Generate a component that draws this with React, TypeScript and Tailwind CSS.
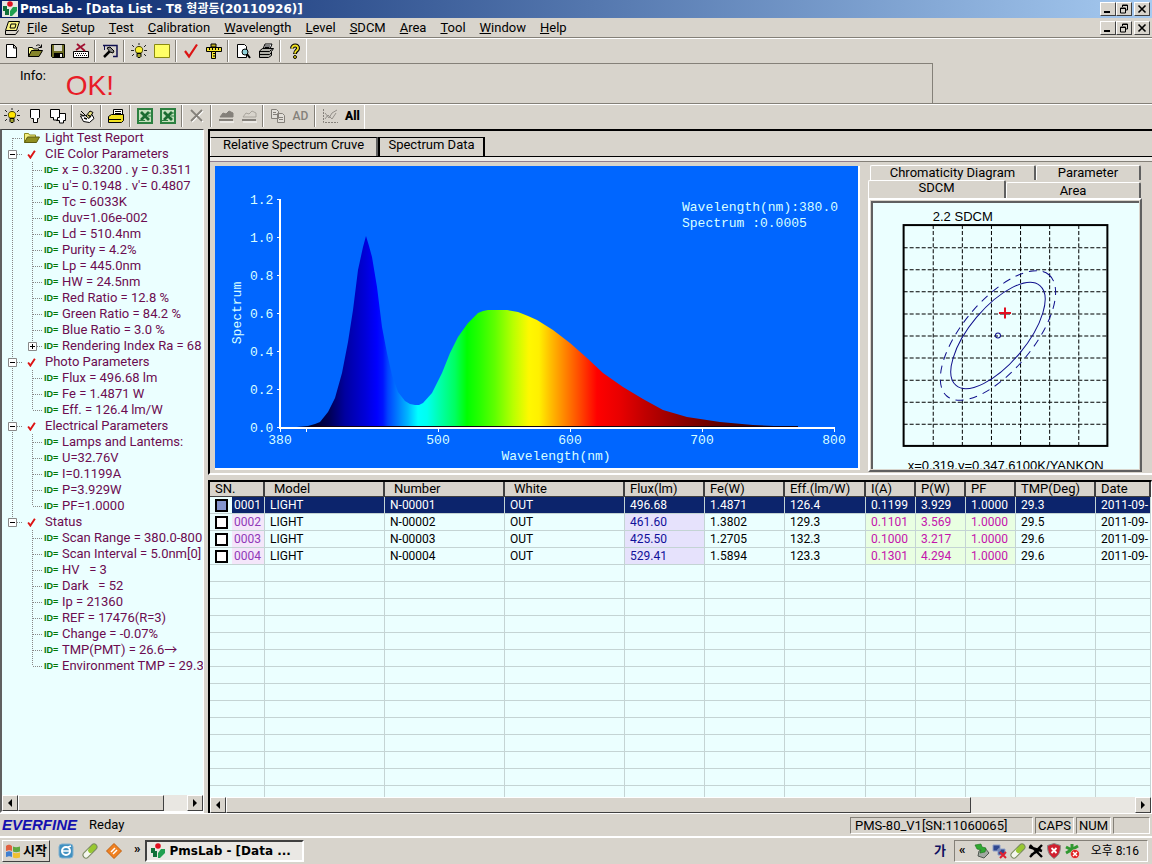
import type { ReactNode } from "react";

const RAISED = "border border-t-white border-l-white border-b-[#404040] border-r-[#404040] bg-[#d8d4cc]";
const SUNKEN = "border border-t-[#848078] border-l-[#848078] border-b-white border-r-white";

const MENU = ["File", "Setup", "Test", "Calibration", "Wavelength", "Level", "SDCM", "Area", "Tool", "Window", "Help"];

type Group = { title: string; items: string[]; expandable?: number };

const GROUPS: Group[] = [
  {
    title: "CIE Color Parameters",
    expandable: 11,
    items: [
      "x = 0.3200 . y = 0.3511", "u'= 0.1948 . v'= 0.4807", "Tc = 6033K", "duv=1.06e-002",
      "Ld = 510.4nm", "Purity = 4.2%", "Lp = 445.0nm", "HW = 24.5nm", "Red Ratio = 12.8 %",
      "Green Ratio = 84.2 %", "Blue Ratio = 3.0 %", "Rendering Index Ra = 68",
    ],
  },
  { title: "Photo Parameters", items: ["Flux = 496.68 lm", "Fe = 1.4871 W", "Eff. = 126.4 lm/W"] },
  { title: "Electrical Parameters", items: ["Lamps and Lantems:", "U=32.76V", "I=0.1199A", "P=3.929W", "PF=1.0000"] },
  {
    title: "Status",
    items: [
      "Scan Range = 380.0-800.", "Scan Interval = 5.0nm[0]", "HV   = 3", "Dark   = 52", "Ip = 21360",
      "REF = 17476(R=3)", "Change = -0.07%", "TMP(PMT) = 26.6→", "Environment TMP = 29.3",
    ],
  },
];

const COLUMNS = [
  { name: "SN.", col: "w-[55px]", cell: "" },
  { name: "Model", col: "w-[120px]", cell: "" },
  { name: "Number", col: "w-[120px]", cell: "" },
  { name: "White", col: "w-[120px]", cell: "" },
  { name: "Flux(lm)", col: "w-[80px]", cell: "bg-[#e6e2fc] text-[#10109a]" },
  { name: "Fe(W)", col: "w-[80px]", cell: "" },
  { name: "Eff.(lm/W)", col: "w-[81px]", cell: "" },
  { name: "I(A)", col: "w-[50px]", cell: "bg-[#e9ffe2] text-[#c414ac]" },
  { name: "P(W)", col: "w-[50px]", cell: "bg-[#e9ffe2] text-[#c414ac]" },
  { name: "PF", col: "w-[50px]", cell: "bg-[#e9ffe2] text-[#c414ac]" },
  { name: "TMP(Deg)", col: "w-[80px]", cell: "" },
  { name: "Date", col: "", cell: "" },
];

const ROWS = [
  ["0001", "LIGHT", "N-00001", "OUT", "496.68", "1.4871", "126.4", "0.1199", "3.929", "1.0000", "29.3", "2011-09-"],
  ["0002", "LIGHT", "N-00002", "OUT", "461.60", "1.3802", "129.3", "0.1101", "3.569", "1.0000", "29.5", "2011-09-"],
  ["0003", "LIGHT", "N-00003", "OUT", "425.50", "1.2705", "132.3", "0.1000", "3.217", "1.0000", "29.6", "2011-09-"],
  ["0004", "LIGHT", "N-00004", "OUT", "529.41", "1.5894", "123.3", "0.1301", "4.294", "1.0000", "29.6", "2011-09-"],
];

const EMPTY_ROWS = Array.from({ length: 14 }, (_, i) => i);

const Icon = ({ children, size = "size-4" }: { children: ReactNode; size?: string }) => (
  <svg viewBox="0 0 16 16" className={`${size} shrink-0`} fill="none" stroke="#000" aria-hidden="true">
    {children}
  </svg>
);

const LogoIcon = ({ size }: { size?: string }) => (
  <Icon size={size}>
    <rect width="16" height="16" fill="#e8e8e2" stroke="none" />
    <circle cx="8" cy="3" r="2.8" fill="#e01020" stroke="none" />
    <path d="M1 5h4v3h2v6H3v-4H1z" fill="#107038" stroke="none" />
    <path d="M15 6h-4l-3 4v5h2l5-5z" fill="#20a050" stroke="none" />
  </Icon>
);

const NewIcon = () => (
  <Icon><path d="M2.500 1.500h7l3 3v10h-10zM9.500 1.500v3.500H13" fill="#fff" /></Icon>
);

const OpenIcon = () => (
  <Icon>
    <path d="M1.5 13.5v-9h4l1 1.500h5v2" fill="#ffff90" />
    <path d="M1.500 13.500l3-6h11l-3.500 6z" fill="#84842a" />
    <path d="M9 3c2-2 4-1 5 1M14.500 1.500v3h-3" />
  </Icon>
);

const SaveIcon = () => (
  <Icon>
    <path d="M1.500 1.500h13v13h-12l-1-1z" fill="#6e6e24" />
    <path d="M4 2h8v6H4z" fill="#d8d8cc" stroke="none" />
    <path d="M4 10h9v4H4z" fill="#000" stroke="none" />
    <path d="M10 11h2v3h-2z" fill="#eee" stroke="none" />
  </Icon>
);

const EraseIcon = () => (
  <Icon>
    <path d="M.5 8.500h15v6H.5z" fill="#fff" />
    <path d="M2 10.500h12M3 12.500h11" strokeDasharray="1 1" />
    <path d="M4 1l8 7M12 1L3 7" stroke="#a01030" strokeWidth="1.800" />
  </Icon>
);

const HammerIcon = () => (
  <Icon>
    <path d="M1 2.500h14v11h-4" stroke="#101050" strokeWidth="1.500" />
    <path d="M2.500 3v4" stroke="#101050" />
    <path d="M2 14l6-6" stroke="#000" strokeWidth="2.500" />
    <path d="M5 5l3-1 4 4-1 2-3-1z" fill="#888" />
  </Icon>
);

const BulbIcon = ({ fill = "#f8f030" }: { fill?: string }) => (
  <Icon>
    <path d="M5.500 10C3 6 5 3.500 8 3.500S13 6 10.500 10z" fill={fill} stroke="#403c00" />
    <path d="M6 10.500h4v3l-1 1H7l-1-1z" fill="#a0a030" />
    <path d="M1 2l2 2M15 2l-2 2M0 7.500h3M13 7.500h3M1 13l2-2M15 13l-2-2M8 0v2" stroke="#222" />
  </Icon>
);

const YellowIcon = () => (
  <Icon><path d="M.5 1.500h15v13H.5z" fill="#ffff66" stroke="#8a8a10" /></Icon>
);

const CheckIcon = ({ size, weight = 2.2 }: { size?: string; weight?: number }) => (
  <Icon size={size}><path d="M2 8l4 5.500L14 1.500" stroke="#dc1414" strokeWidth={weight} /></Icon>
);

const RulerIcon = () => (
  <Icon>
    <path d="M.5 4.500h15v4h-15z" fill="#f4e430" />
    <path d="M5.500 8.500h4v7h-4z" fill="#f4e430" />
    <path d="M5 1h5v3H5z" fill="#c0b020" />
    <path d="M3.500 5v2M6.500 5v2M9.500 5v2M12.500 5v2M7 10.500h2M7 13h2" />
  </Icon>
);

const PreviewIcon = () => (
  <Icon>
    <path d="M2.500 1.500h7l2 2v11h-9z" fill="#fff" />
    <circle cx="10" cy="9" r="3" fill="#90d0d8" />
    <path d="M12 11l3 4" strokeWidth="2" />
  </Icon>
);

const PrintIcon = () => (
  <Icon>
    <path d="M5 6l2-5h7l-2 5" fill="#fff" />
    <path d="M1.500 8l3-2.500h11l-2 3v4l-3 2H1.500z" fill="#b0b0a8" />
    <path d="M1.500 8.500h10l2-2M1.500 11.500h10l2-2M7 3h5M6.500 4.500h5" />
  </Icon>
);

const HelpIcon = () => (
  <Icon>
    <path d="M5 5.500C5 1.500 11.500 1.500 11 5.500 10.500 8 8 7.500 8 11" stroke="#000" strokeWidth="4" />
    <path d="M5 5.500C5 1.500 11.500 1.500 11 5.500 10.500 8 8 7.500 8 10.500" stroke="#f0e020" strokeWidth="1.800" />
    <circle cx="8" cy="14" r="1.500" fill="#f0e020" />
  </Icon>
);

const LampIcon = ({ double = false }: { double?: boolean }) => (
  <Icon>
    {double ? (
      <>
        <path d="M6.500 5.500h9v7h-2v2.500h-4v-2.500h-3z" fill="#fff" />
        <path d="M.5 1.500h9v8h-2v2.500h-4V9.500h-3z" fill="#fff" />
      </>
    ) : (
      <path d="M3.500 1.500h9v8l-1 1h-1v4h-4v-4h-2l-1-1z" fill="#fff" />
    )}
  </Icon>
);

const PenIcon = () => (
  <Icon>
    <path d="M1.500 8l3 5.500 6 1 4.500-4-2-4-5 1z" fill="#fff" />
    <path d="M2 3l4 4M1 6l4 2M7 8l4-5 3 1.500-4 6z" fill="#e8e080" />
    <path d="M5 10l3 1M9 7l3 2" strokeWidth="1.500" />
  </Icon>
);

const StackIcon = () => (
  <Icon>
    <path d="M5.500 1.500h9v8h-9z" fill="#fff" />
    <path d="M7 3.500h6M7 5.500h6" />
    <path d="M.5 8.500l3-2h12v6l-2 2H.5z" fill="#f0e020" />
    <path d="M1 11.500h12" />
  </Icon>
);

const ExcelIcon = () => (
  <Icon>
    <path d="M1 1h14v14H1z" fill="#c4e0bc" stroke="#2c8040" strokeWidth="2" />
    <path d="M4 4l8 8M12 4l-8 8" stroke="#1c6c30" strokeWidth="2.800" />
    <path d="M11 5h3M11 8h3M2 12.500h6" stroke="#2c8040" />
  </Icon>
);

const CrossIcon = () => (
  <Icon>
    <path d="M3 3l11 11M14 3L3 14" stroke="#fff" strokeWidth="1.500" />
    <path d="M2 2l11 11M13 2L2 13" stroke="#84807a" strokeWidth="1.800" />
  </Icon>
);

const HillIcon = ({ filled = false }: { filled?: boolean }) => (
  <Icon>
    <path d="M2 9l3-4 3 1 3-3 4 2v4z" fill={filled ? "#84807a" : "none"} stroke={filled ? "#84807a" : "#a8a49c"} />
    <path d="M1 12h14" stroke="#84807a" strokeWidth="2" />
    <path d="M2 14h14" stroke="#fff" />
  </Icon>
);

const CopyIcon = () => (
  <Icon>
    <path d="M1.500 1.500h5l2 2v7h-7zM7.500 5.500h5l2 2v7h-7z" fill="#e2dfd9" stroke="#84807a" />
    <path d="M3 4.500h3M3 6.500h4M9 9.500h4M9 11.500h4" stroke="#84807a" />
  </Icon>
);

const PlotIcon = () => (
  <Icon>
    <path d="M1.500 1v13.500H16" stroke="#84807a" strokeDasharray="2 1" />
    <path d="M3 5l4 5 3-5 5-3M3 11l3-4 4 4 4-6" stroke="#94908a" />
  </Icon>
);

const FolderIcon = () => (
  <Icon>
    <path d="M.5 12.500v-9h4l1 1.500h6v2" fill="#f4f080" stroke="#8c8c20" />
    <path d="M.5 12.500l3-5.500h12l-3 5.500z" fill="#909020" stroke="#5c5c10" />
  </Icon>
);

const ToolButton = ({ label, children }: { label: string; children: ReactNode }) => (
  <button aria-label={label} className="flex h-[22px] w-[23px] items-center justify-center">{children}</button>
);

const Sep = () => (
  <span className="flex h-[22px] w-[6px] justify-center">
    <span className="w-[2px] border-l border-l-[#848078] border-r border-r-white" />
  </span>
);

const WindowButtons = () => (
  <div className="flex items-center pr-[2px]">
    <button aria-label="Minimize" className={`${RAISED} flex h-[14px] w-4 items-center justify-center`}>
      <svg viewBox="0 0 12 10" className="h-[10px] w-3"><path d="M2 8h6" stroke="#000" strokeWidth="2" /></svg>
    </button>
    <button aria-label="Restore" className={`${RAISED} flex h-[14px] w-4 items-center justify-center`}>
      <svg viewBox="0 0 12 10" className="h-[10px] w-3" fill="none" stroke="#000">
        <path d="M4.500 3V1h5v5H8M4 1.500h6M2.500 4h5v5h-5zM2 4.500h6" />
      </svg>
    </button>
    <button aria-label="Close" className={`${RAISED} ml-[2px] flex h-[14px] w-4 items-center justify-center`}>
      <svg viewBox="0 0 12 10" className="h-[10px] w-3"><path d="M2.500 1.500l7 7M9.500 1.500l-7 7" stroke="#000" strokeWidth="1.600" /></svg>
    </button>
  </div>
);

// dotted connector left of each tree entry
const Guide = ({ up, down, right, box }: { up?: boolean; down?: boolean; right?: boolean; box?: "+" | "-" }) => (
  <svg viewBox="0 0 20 16" className="h-4 w-5 shrink-0" fill="none" stroke="#888" aria-hidden="true">
    {up && <path d="M10.500 0v8" strokeDasharray="1 1" />}
    {down && <path d="M10.500 8v8" strokeDasharray="1 1" />}
    {right && <path d="M11 8.500h9" strokeDasharray="1 1" />}
    {box && (
      <>
        <path d="M6.500 4.500h8v8h-8z" fill="#fff" />
        <path d={box === "+" ? "M8 8.500h5M10.500 6v5" : "M8 8.500h5"} stroke="#000" />
      </>
    )}
  </svg>
);

const ScrollBar = ({ thumb }: { thumb: string }) => (
  <div className="flex h-4 shrink-0 bg-[#e9e7e2]">
    <button aria-label="Scroll left" className={`${RAISED} flex w-4 items-center justify-center`}>
      <svg viewBox="0 0 8 8" className="size-2"><path d="M6 0v8L2 4z" /></svg>
    </button>
    <div className="flex flex-1"><div className={`${RAISED} ${thumb}`} /></div>
    <button aria-label="Scroll right" className={`${RAISED} flex w-4 items-center justify-center`}>
      <svg viewBox="0 0 8 8" className="size-2"><path d="M2 0v8l4-4z" /></svg>
    </button>
  </div>
);

const TreePanel = () => (
  <div className="flex w-[204px] shrink-0 flex-col border-t border-r border-b-2 border-l-2 border-t-[#404040] border-r-white border-b-white border-l-[#606060] bg-[#ebffff]">
    <ul className="min-h-0 flex-1 overflow-hidden whitespace-pre text-[13px] leading-4 text-[#6c0c50]">
      <li className="flex h-4">
        <Guide down right />
        <span className="mr-1 flex w-[19px] justify-center"><FolderIcon /></span>
        Light Test Report
      </li>
      {GROUPS.map((g, gi) => {
        const last = gi === GROUPS.length - 1;
        return (
          <li key={g.title}>
            <div className="flex h-4">
              <Guide up down={!last} right box="-" />
              <span className="mr-1 flex w-[19px] items-center justify-center"><CheckIcon size="size-[9px]" weight={3.4} /></span>
              {g.title}
            </div>
            <ul>
              {g.items.map((item, i) => (
                <li key={item} className="flex h-4">
                  <Guide up={!last} down={!last} />
                  <Guide up down={i < g.items.length - 1} right box={g.expandable === i ? "+" : undefined} />
                  <span className="w-5 shrink-0 pl-[2px] font-[Liberation_Sans] text-[9px] font-bold text-[#007808]">ID=</span>
                  {item}
                </li>
              ))}
            </ul>
          </li>
        );
      })}
    </ul>
    <ScrollBar thumb="w-[146px]" />
  </div>
);

const CURVE =
  "M70 262L93 260L100 258L105 256L113 246L120 232L127 207L133 176L138 144L143 104L148 81L151 70L154 80L157 91L162 121L167 161L172 187L177 209L183 226L190 235L195 238L200 239L204 239L208 237L217 227L227 207L235 187L243 171L253 157L263 147L268 145L273 144L282 144L292 144L303 146L313 150L322 154L338 164L355 177L372 192L388 207L408 221L428 233L448 244L472 251L505 256L538 259L583 261V262Z";

const STOPS: [number, string][] = [
  [95, "#000020"], [115, "#000058"], [130, "#0000a0"], [150, "#0000d8"], [162, "#0000ff"], [168, "#0014ff"],
  [173, "#0044ff"], [182, "#0078ff"], [193, "#00b8ff"], [203, "#00ffff"], [212, "#00fff0"], [224, "#00ffb0"],
  [240, "#00ff60"], [252, "#00ff00"], [265, "#28ff00"], [280, "#60ff00"], [298, "#b8ff00"], [314, "#fff800"],
  [324, "#fff000"], [335, "#ffc000"], [350, "#ff8400"], [363, "#ff5000"], [382, "#ff0000"], [405, "#e80000"],
  [430, "#c00000"], [470, "#880000"], [520, "#500000"], [583, "#200000"],
];

const Y_TICKS = ["0.0", "0.2", "0.4", "0.6", "0.8", "1.0", "1.2"];
const X_TICKS: [number, string][] = [[65, "380"], [223, "500"], [355, "600"], [487, "700"], [619, "800"]];

const SpectrumChart = () => (
  <svg viewBox="0 0 643 302" className="h-full w-full bg-[#0066ff] font-[Liberation_Mono] text-[13px]" role="img" aria-label="Spectrum">
    <defs>
      <linearGradient id="spectrum" gradientUnits="userSpaceOnUse" x1="93" x2="583" y1="0" y2="0">
        {STOPS.map(([x, color]) => (
          <stop key={x} offset={(x - 93) / 490} stopColor={color} />
        ))}
      </linearGradient>
    </defs>
    <path d={CURVE} fill="url(#spectrum)" />
    <path d="M95 260.500H583" stroke="#100010" />
    <path d="M65 33V263M64 262H620" stroke="#fff" strokeWidth="2" />
    <g fill="#d8ffff" stroke="none">
      {Y_TICKS.map((t, i) => (
        <g key={t}>
          <path d={`M62 ${262 - i * 38}h4v-1h-4z`} fill="#fff" />
          <text x="35" y={266 - i * 38}>{t}</text>
        </g>
      ))}
      {X_TICKS.map(([x, t]) => (
        <g key={t}>
          <path d={`M${x} 262v4h1v-4z`} fill="#fff" />
          <text x={x} y="278" textAnchor="middle">{t}</text>
        </g>
      ))}
      <path d="M91 262v4h1v-4z" fill="#fff" />
      <text x="341" y="294" textAnchor="middle">Wavelength(nm)</text>
      <text transform="rotate(-90 26 147)" x="26" y="147" textAnchor="middle">Spectrum</text>
      <text x="467" y="45">Wavelength(nm):380.0</text>
      <text x="467" y="61">Spectrum :0.0005</text>
    </g>
  </svg>
);

const SdcmChart = () => (
  <svg viewBox="0 0 264 265" className="h-full w-full font-[Liberation_Sans] text-[13px]" role="img" aria-label="SDCM">
    <g stroke="#000" strokeDasharray="4 2">
      {[1, 2, 3, 4, 5, 6].map(i => <path key={i} d={`M${30.5 + i * 29} 22v220`} />)}
      {[1, 2, 3, 4, 5, 6, 7, 8, 9].map(i => <path key={i} d={`M30 ${22.5 + i * 22}h203`} />)}
    </g>
    <rect x="30" y="22" width="203" height="220" fill="none" stroke="#000" strokeWidth="2" />
    <g fill="none" stroke="#10108c">
      <ellipse cx="124" cy="132" rx="65" ry="28" transform="rotate(-50 124 132)" />
      <ellipse cx="124" cy="132" rx="79" ry="35" transform="rotate(-50 124 132)" strokeDasharray="8 6" />
      <circle cx="124" cy="132" r="2.500" />
    </g>
    <path d="M131 104v11M125 109.500h12" stroke="#e01020" strokeWidth="2" />
    <text x="59" y="18">2.2 SDCM</text>
    <text x="34" y="266">x=0.319,y=0.347,6100K/YANKON</text>
  </svg>
);

const TAB = "rounded-t-[2px] border-t border-l border-r-2 border-t-white border-l-white border-r-[#606060] bg-[#d8d4cc] leading-[14px]";

const ChartPane = () => (
  <div className="flex h-[346px] shrink-0 flex-col border-t-2 border-l-2 border-black border-b-2 border-b-white">
    <div className="flex h-[26px] items-end border-b border-b-black" role="tablist">
      <button role="tab" aria-selected="true" className="h-[19px] w-[168px] border-t border-l border-r-2 border-t-black border-l-white border-r-[#606060] pb-1 leading-[14px]">
        Relative Spectrum Cruve
      </button>
      <button role="tab" aria-selected="false" className="h-[19px] w-[107px] border border-b-0 border-l-2 border-r-2 border-black pb-1 leading-[14px]">
        Spectrum Data
      </button>
    </div>
    <div className="flex min-h-0 flex-1 border-t-4 border-t-[#eeece8]">
      <div className="min-w-0 flex-1 border-t border-t-[#907c90] pt-1 pb-[3px] pl-[5px]">
        <div className="h-full border-r-2 border-b-2 border-white"><SpectrumChart /></div>
      </div>
      <div className="flex w-[292px] shrink-0 flex-col border-t border-t-[#848078] pt-[3px] pr-[10px] pb-px pl-2">
        <div className="flex h-[15px] pr-px pl-[2px]">
          <button className={`${TAB} h-[15px] w-[166px] overflow-hidden`}>Chromaticity Diagram</button>
          <button className={`${TAB} h-[15px] flex-1 overflow-hidden`}>Parameter</button>
        </div>
        <div className="flex h-[18px] items-end pr-px">
          <button className={`${TAB} h-[18px] w-[138px] pb-[3px]`}>SDCM</button>
          <button className={`${TAB} h-4 flex-1`}>Area</button>
        </div>
        <div className="min-h-0 flex-1 border-2 border-t-white border-l-white border-r-[#606060] border-b-[#606060] p-px">
          <div className="h-full overflow-hidden border-t-2 border-l-2 border-[#606060] bg-[#ebffff]"><SdcmChart /></div>
        </div>
      </div>
    </div>
  </div>
);

const DataTable = () => (
  <div className="mt-[5px] flex min-h-0 flex-1 flex-col border-t-2 border-r border-l-2 border-black border-r-white bg-[#ebffff]">
    <div className="min-h-0 flex-1 overflow-hidden">
      <table className="w-full table-fixed border-separate border-spacing-0 text-[12px] leading-4">
        <thead className="text-[13px]">
          <tr>
            {COLUMNS.map((c, i) => (
              <th key={c.name} scope="col" className={`${c.col} h-[15px] overflow-hidden border-r-2 border-b border-r-[#404040] border-b-[#404040] bg-[#d8d4cc] p-0 text-left font-normal leading-[14px] ${i > 0 && i < 4 ? "pl-[9px]" : "pl-[5px]"}`}>
                {c.name}
              </th>
            ))}
          </tr>
        </thead>
        <tbody>
          {ROWS.map((row, r) => (
            <tr key={row[0]} className={r === 0 ? "bg-[#0c246c] text-white" : ""}>
              {row.map((value, i) =>
                i === 0 ? (
                  <td key={i} className="h-[17px] border-r border-b border-[#c4d4d4] bg-[#ebffff] p-0">
                    <label className="flex h-4 items-center pl-[5px]">
                      <input
                        type="checkbox"
                        aria-label={`Select ${value}`}
                        className={`size-[13px] shrink-0 appearance-none border-2 border-black ${r === 0 ? "bg-[#8494cc]" : "bg-white"}`}
                      />
                      <span className={`ml-1 h-4 flex-1 pl-[2px] ${r === 0 ? "bg-[#0c246c] text-white" : "bg-[#f4e6fa] text-[#9038b8]"}`}>{value}</span>
                    </label>
                  </td>
                ) : (
                  <td key={i} className={`h-[17px] overflow-hidden border-r border-b border-[#c4d4d4] p-0 pl-[5px] whitespace-nowrap ${r > 0 ? COLUMNS[i].cell : ""}`}>
                    {value}
                  </td>
                )
              )}
            </tr>
          ))}
          {EMPTY_ROWS.map(r => (
            <tr key={r}>
              {COLUMNS.map(c => (
                <td key={c.name} className="h-[17px] border-r border-b border-[#c4d4d4] p-0" />
              ))}
            </tr>
          ))}
        </tbody>
      </table>
    </div>
    <ScrollBar thumb="w-[82%]" />
  </div>
);

const StatusBar = () => (
  <div className="flex h-[23px] shrink-0 items-center gap-[2px] border-t border-t-white pr-[2px]">
    <span className="ml-[2px] font-[Liberation_Sans] text-[15px] font-bold italic text-[#1410b0]">EVERFINE</span>
    <span className="ml-[10px] flex-1">Reday</span>
    <span className={`${SUNKEN} h-[17px] w-[183px] pl-1 leading-4`}>PMS-80_V1[SN:11060065]</span>
    <span className={`${SUNKEN} h-[17px] w-[39px] text-center leading-4`}>CAPS</span>
    <span className={`${SUNKEN} h-[17px] w-[35px] text-center leading-4`}>NUM</span>
    <span className={`${SUNKEN} h-[17px] w-[37px]`} />
  </div>
);

const PillIcon = () => (
  <Icon>
    <path d="M4 12l8-8" stroke="#7a8a60" strokeWidth="7" strokeLinecap="round" />
    <path d="M4 12l4-4" stroke="#f4f6ee" strokeWidth="5" strokeLinecap="round" />
    <path d="M8.500 7.500L12 4" stroke="#98c830" strokeWidth="5" strokeLinecap="round" />
  </Icon>
);

const TaskBar = () => (
  <div className="flex h-[28px] shrink-0 items-center border-t-2 border-t-white pr-1 pl-[2px]">
    <button className={`${RAISED} flex h-[22px] w-[48px] items-center gap-[2px] pl-[2px] font-bold`}>
      <Icon>
        <g stroke="none">
          <path d="M1 3c3-2 4-1 6 0v5c-2-1-3-1-6 0z" fill="#e06040" />
          <path d="M8 3.500c2 1 4 1 7 0v5c-3 1-5 1-7 0z" fill="#60a840" />
          <path d="M1 9c3-1 4-1 6 0v5c-2-1-3-1-6 0z" fill="#4080d0" />
          <path d="M8 9.500c2 1 4 1 7 0v5c-3 1-5 1-7 0z" fill="#f0c030" />
        </g>
      </Icon>
      시작
    </button>
    <div className="ml-2 flex items-center gap-2">
      <Icon>
        <rect x="1" y="1" width="14" height="14" rx="3" fill="#4090c0" stroke="#80b0d0" />
        <circle cx="8" cy="8" r="4" stroke="#fff" strokeWidth="2" />
        <path d="M5 8h6M10 4l3-1" stroke="#fff" strokeWidth="1.500" />
      </Icon>
      <PillIcon />
      <Icon>
        <path d="M8 .5L15.500 8 8 15.500.5 8z" fill="#f08020" stroke="#c06010" strokeLinejoin="round" />
        <path d="M5 9l4-4M7 11l4-4" stroke="#fff" strokeWidth="1.500" />
      </Icon>
    </div>
    <span className="ml-3 pb-1 font-bold">»</span>
    <button className="ml-1 flex h-[22px] w-[159px] items-center gap-1 border-2 border-t-[#404040] border-r-white border-b-white border-l-[#404040] bg-[#eae8e4] pl-[3px] font-[DejaVu_Sans] text-[12px] font-bold">
      <LogoIcon />
      PmsLab - [Data ...
    </button>
    <span className="ml-auto font-bold text-[#101060]">가</span>
    <div className={`${SUNKEN} ml-2 flex h-[22px] w-[194px] items-center gap-[2px] pl-1`}>
      <span className="w-[13px] pb-[2px] font-bold">«</span>
      <Icon>
        <path d="M5 8l6-3 4 5-5 5-6-2z" fill="#a0a8a0" stroke="#505850" />
        <path d="M1 2l6-1 1 3 4 1-1 4-5 1 1-3-4-1z" fill="#30a830" stroke="#187018" strokeWidth=".6" />
      </Icon>
      <Icon>
        <path d="M1 2h7v6H1zM6 6h7v6H6z" fill="#304890" stroke="#90a0c8" />
        <path d="M8 9l6 6M14 9l-6 6" stroke="#e02030" strokeWidth="2" />
      </Icon>
      <PillIcon />
      <Icon>
        <path d="M2 2l12 12M14 2L2 14M1 4l13 4M3 12l10-6" strokeWidth="2.400" />
      </Icon>
      <Icon>
        <path d="M8 .5l6.500 2c0 7-2 10-6.500 13-4.500-3-6.500-6-6.500-13z" fill="#d02030" stroke="#888" />
        <path d="M5.500 5l5 5M10.500 5l-5 5" stroke="#fff" strokeWidth="1.800" />
      </Icon>
      <Icon>
        <path d="M8 1v11M2 4l12 6M14 3L2 10" stroke="#309830" strokeWidth="3" />
        <circle cx="11" cy="11" r="4.500" fill="#e02020" stroke="#fff" strokeWidth=".5" />
        <path d="M9 9l4 4M13 9l-4 4" stroke="#fff" strokeWidth="1.500" />
      </Icon>
      <span className="mr-2 ml-auto text-[12px]">오후 8:16</span>
    </div>
  </div>
);

const App = () => (
  <div className="flex h-screen flex-col overflow-hidden bg-[#d8d4cc] font-[Roboto,Noto_Sans_CJK_KR,sans-serif] text-[13px] leading-4 text-black">
    <header className="shrink-0">
      <div className="flex h-[18px] items-center justify-between bg-linear-to-r from-[#0a246a] to-[#a6caf0] pl-[2px]">
        <h1 className="flex items-center gap-[2px] font-[DejaVu_Sans,Noto_Sans_CJK_KR,sans-serif] text-[12px] font-bold text-white">
          <LogoIcon />
          PmsLab - [Data List - T8 형광등(20110926)]
        </h1>
        <WindowButtons />
      </div>
      <div className="flex h-5 items-center justify-between border-b border-b-[#848078] pl-1">
        <nav className="flex items-center">
          <Icon>
            <path d="M4.500 1.500h11l-3 9h-11z" fill="#f8f080" />
            <path d="M1.500 11v3.500h10l3-4M7 4h5l-1 4H6z" />
          </Icon>
          {MENU.map(m => (
            <button key={m} className="px-[7px]"><u>{m[0]}</u>{m.slice(1)}</button>
          ))}
        </nav>
        <WindowButtons />
      </div>
      <div className="flex h-[25px] border-t border-t-white">
        <div className="flex items-center border-r border-r-white">
          <ToolButton label="New"><NewIcon /></ToolButton>
          <ToolButton label="Open"><OpenIcon /></ToolButton>
          <ToolButton label="Save"><SaveIcon /></ToolButton>
          <ToolButton label="Erase"><EraseIcon /></ToolButton>
          <Sep />
          <ToolButton label="Options"><HammerIcon /></ToolButton>
          <Sep />
          <ToolButton label="Light"><BulbIcon /></ToolButton>
          <ToolButton label="Color"><YellowIcon /></ToolButton>
          <Sep />
          <ToolButton label="Test"><CheckIcon /></ToolButton>
          <ToolButton label="Calibrate"><RulerIcon /></ToolButton>
          <Sep />
          <ToolButton label="Preview"><PreviewIcon /></ToolButton>
          <ToolButton label="Print"><PrintIcon /></ToolButton>
          <Sep />
          <ToolButton label="Help"><HelpIcon /></ToolButton>
        </div>
      </div>
      <div className="flex h-10 w-[81%] border-t border-r border-[#848078] pl-5">
        <span className="pt-1">Info:</span>
        <output className="ml-5 pt-2 font-[Liberation_Sans] text-[28px] leading-7 text-[#e81c28]">OK!</output>
      </div>
      <div className="flex h-[26px] border-t border-t-[#848078]">
        <div className="flex flex-1 border-t border-t-white">
          <div className="flex items-start border-r border-r-white">
            <ToolButton label="Lamp on"><BulbIcon fill="#ffe400" /></ToolButton>
            <ToolButton label="Lamp"><LampIcon /></ToolButton>
            <ToolButton label="Lamps"><LampIcon double /></ToolButton>
            <Sep />
            <ToolButton label="Edit"><PenIcon /></ToolButton>
            <Sep />
            <ToolButton label="Print list"><StackIcon /></ToolButton>
            <Sep />
            <ToolButton label="Export"><ExcelIcon /></ToolButton>
            <ToolButton label="Export all"><ExcelIcon /></ToolButton>
            <Sep />
            <ToolButton label="Delete"><CrossIcon /></ToolButton>
            <Sep />
            <ToolButton label="Fill curve"><HillIcon filled /></ToolButton>
            <ToolButton label="Line curve"><HillIcon /></ToolButton>
            <Sep />
            <ToolButton label="Copy"><CopyIcon /></ToolButton>
            <button className="h-[22px] w-[23px] text-[12px] font-medium text-[#84807a]">AD</button>
            <Sep />
            <ToolButton label="Plot"><PlotIcon /></ToolButton>
            <button className="h-[22px] w-[23px] text-[12px] font-black">All</button>
          </div>
        </div>
      </div>
    </header>
    <main className="flex min-h-0 flex-1 gap-1">
      <TreePanel />
      <section className="flex min-w-0 flex-1 flex-col">
        <ChartPane />
        <DataTable />
      </section>
    </main>
    <StatusBar />
    <TaskBar />
  </div>
);

export default App;
